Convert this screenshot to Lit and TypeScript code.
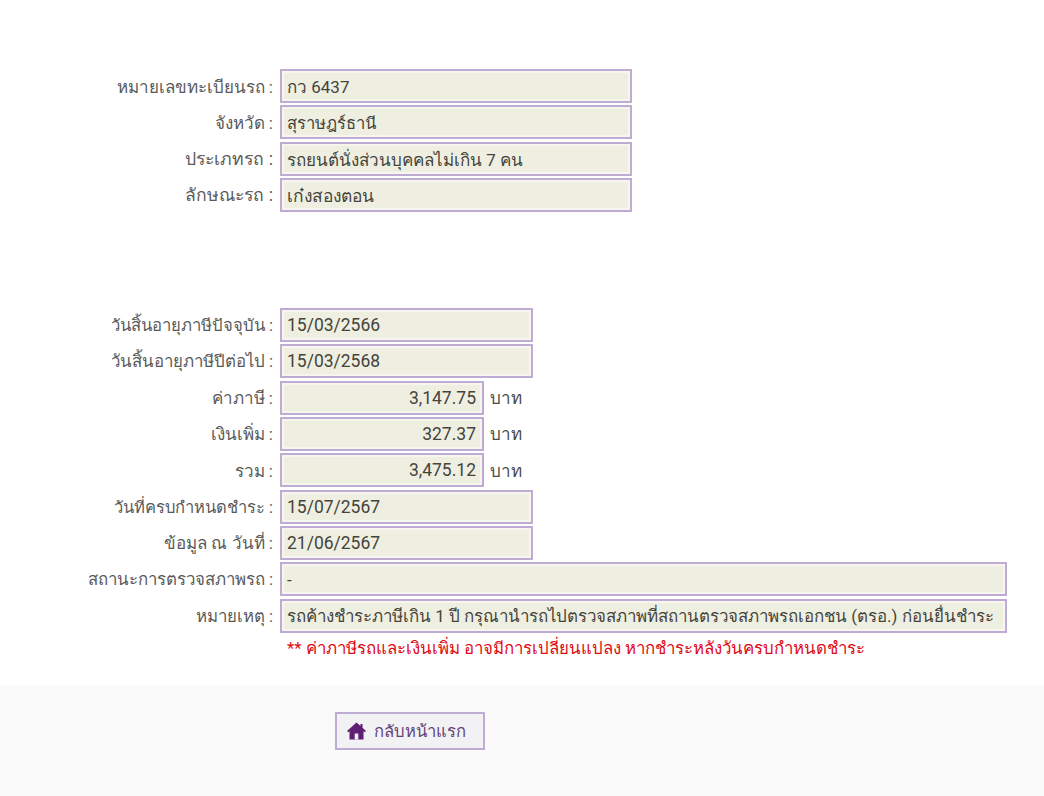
import { LitElement, html, css } from "lit";
import { customElement } from "lit/decorators.js";

type Row = {
  label: string;
  value: string;
  size: "long" | "mid" | "short" | "full";
  unit?: string;
  fit?: "tight" | "mild" | "snug" | "wide";
  valueFit?: "num" | "tight" | "wide" | "small";
};

const first: Row[] = [
  { label: "หมายเลขทะเบียนรถ :", value: "กว 6437", size: "long" },
  { label: "จังหวัด :", value: "สุราษฎร์ธานี", size: "long", valueFit: "tight" },
  { label: "ประเภทรถ :", value: "รถยนต์นั่งส่วนบุคคลไม่เกิน 7 คน", size: "long", fit: "wide" },
  { label: "ลักษณะรถ :", value: "เก๋งสองตอน", size: "long", fit: "wide", valueFit: "wide" },
];
const second: Row[] = [
  { label: "วันสิ้นอายุภาษีปัจจุบัน :", value: "15/03/2566", size: "mid", fit: "mild", valueFit: "num" },
  { label: "วันสิ้นอายุภาษีปีต่อไป :", value: "15/03/2568", size: "mid", fit: "snug", valueFit: "num" },
  { label: "ค่าภาษี :", value: "3,147.75", size: "short", unit: "บาท", valueFit: "num" },
  { label: "เงินเพิ่ม :", value: "327.37", size: "short", unit: "บาท", valueFit: "num" },
  { label: "รวม :", value: "3,475.12", size: "short", unit: "บาท", valueFit: "num" },
  { label: "วันที่ครบกำหนดชำระ :", value: "15/07/2567", size: "mid", fit: "tight", valueFit: "num" },
  { label: "ข้อมูล ณ วันที่ :", value: "21/06/2567", size: "mid", valueFit: "num" },
  { label: "สถานะการตรวจสภาพรถ :", value: "-", size: "full", fit: "snug" },
  {
    label: "หมายเหตุ :",
    value: "รถค้างชำระภาษีเกิน 1 ปี กรุณานำรถไปตรวจสภาพที่สถานตรวจสภาพรถเอกชน (ตรอ.) ก่อนยื่นชำระ",
    size: "full",
    fit: "snug",
    valueFit: "small",
  },
];

@customElement("app-root")
export class AppRoot extends LitElement {
  static styles = css`
    :host { display: block; width: 1044px; height: 796px; overflow: hidden; background: #fff;
      font-family: Roboto, "Noto Sans", sans-serif; font-size: 17px; color: #4a4a4a; }
    .main { height: 686px; padding-top: 68px; box-sizing: border-box; }
    .section { display: flex; flex-direction: column; }
    .section + .section { margin-top: 93.5px; }
    .row { display: flex; align-items: center; height: 36.33px; }
    .label { width: 273px; text-align: right; white-space: nowrap; flex: none; color: #5a5a5a; }
    .label.tight { font-size: 16.55px; }
    .label.mild { font-size: 16.7px; }
    .label.snug { font-size: 16.85px; }
    .label.wide { font-size: 17.6px; }
    .field { margin-left: 7px; height: 34px; box-sizing: border-box; border: 2px solid #bfacd5;
      background: #efefe1; box-shadow: inset 0 0 0 2px #f6f6ee; padding: 0 4px 0 5px; line-height: 32px;
      white-space: nowrap; overflow: hidden; color: #44443c; flex: none; }
    .field.num { font-size: 17.5px; line-height: 30px; }
    .field.tight { font-size: 16.6px; line-height: 34px; }
    .field.wide { font-size: 17.4px; }
    .field.small { font-size: 16.9px; line-height: 30px; }
    .long { width: 352px; }
    .mid { width: 253px; }
    .short { width: 204px; text-align: right; padding-right: 6px; }
    .full { width: 727px; }
    .unit { margin-left: 6px; color: #4a4a4a; }
    .note { margin: 1px 0 0 287px; color: #e00a14; line-height: 26px; white-space: nowrap; font-size: 16.85px; }
    .footer { height: 110px; background: #fafafa; padding: 26px 0 0 335px; box-sizing: border-box; }
    .btn { width: 150px; height: 38px; box-sizing: border-box; border: 2px solid #bfacd5; background: #f2f1f3;
      display: flex; align-items: center; padding-left: 10px; gap: 8px; color: #63437a; font-size: 16.6px; }
    svg { width: 19px; height: 18px; flex: none; }
    .house { fill: #5f1f73; }
    .door { fill: #f2f1f3; }
  `;

  private rows(list: Row[]) {
    return list.map(
      (r) => html`<div class="row">
        <div class="label ${r.fit ?? ""}">${r.label}</div>
        <div class="field ${r.size} ${r.valueFit ?? ""}">${r.value}</div>
        ${r.unit ? html`<span class="unit">${r.unit}</span>` : ""}
      </div>`
    );
  }

  render() {
    return html`
      <div class="main">
        <div class="section">${this.rows(first)}</div>
        <div class="section">
          ${this.rows(second)}
          <div class="note">** ค่าภาษีรถและเงินเพิ่ม อาจมีการเปลี่ยนแปลง หากชำระหลังวันครบกำหนดชำระ</div>
        </div>
      </div>
      <div class="footer">
        <div class="btn">
          <svg viewBox="0 0 19 18">
            <path class="house" d="M9.5 0.5 L13.5 4 V2 H15.5 V5.8 L19 9 L17.8 10.2 L16.5 9.2 V17.5 H2.5 V9.2 L1.2 10.2 L0 9 Z" />
            <rect class="door" x="7.7" y="11.5" width="3.6" height="6" />
          </svg>
          <span>กลับหน้าแรก</span>
        </div>
      </div>
    `;
  }
}
